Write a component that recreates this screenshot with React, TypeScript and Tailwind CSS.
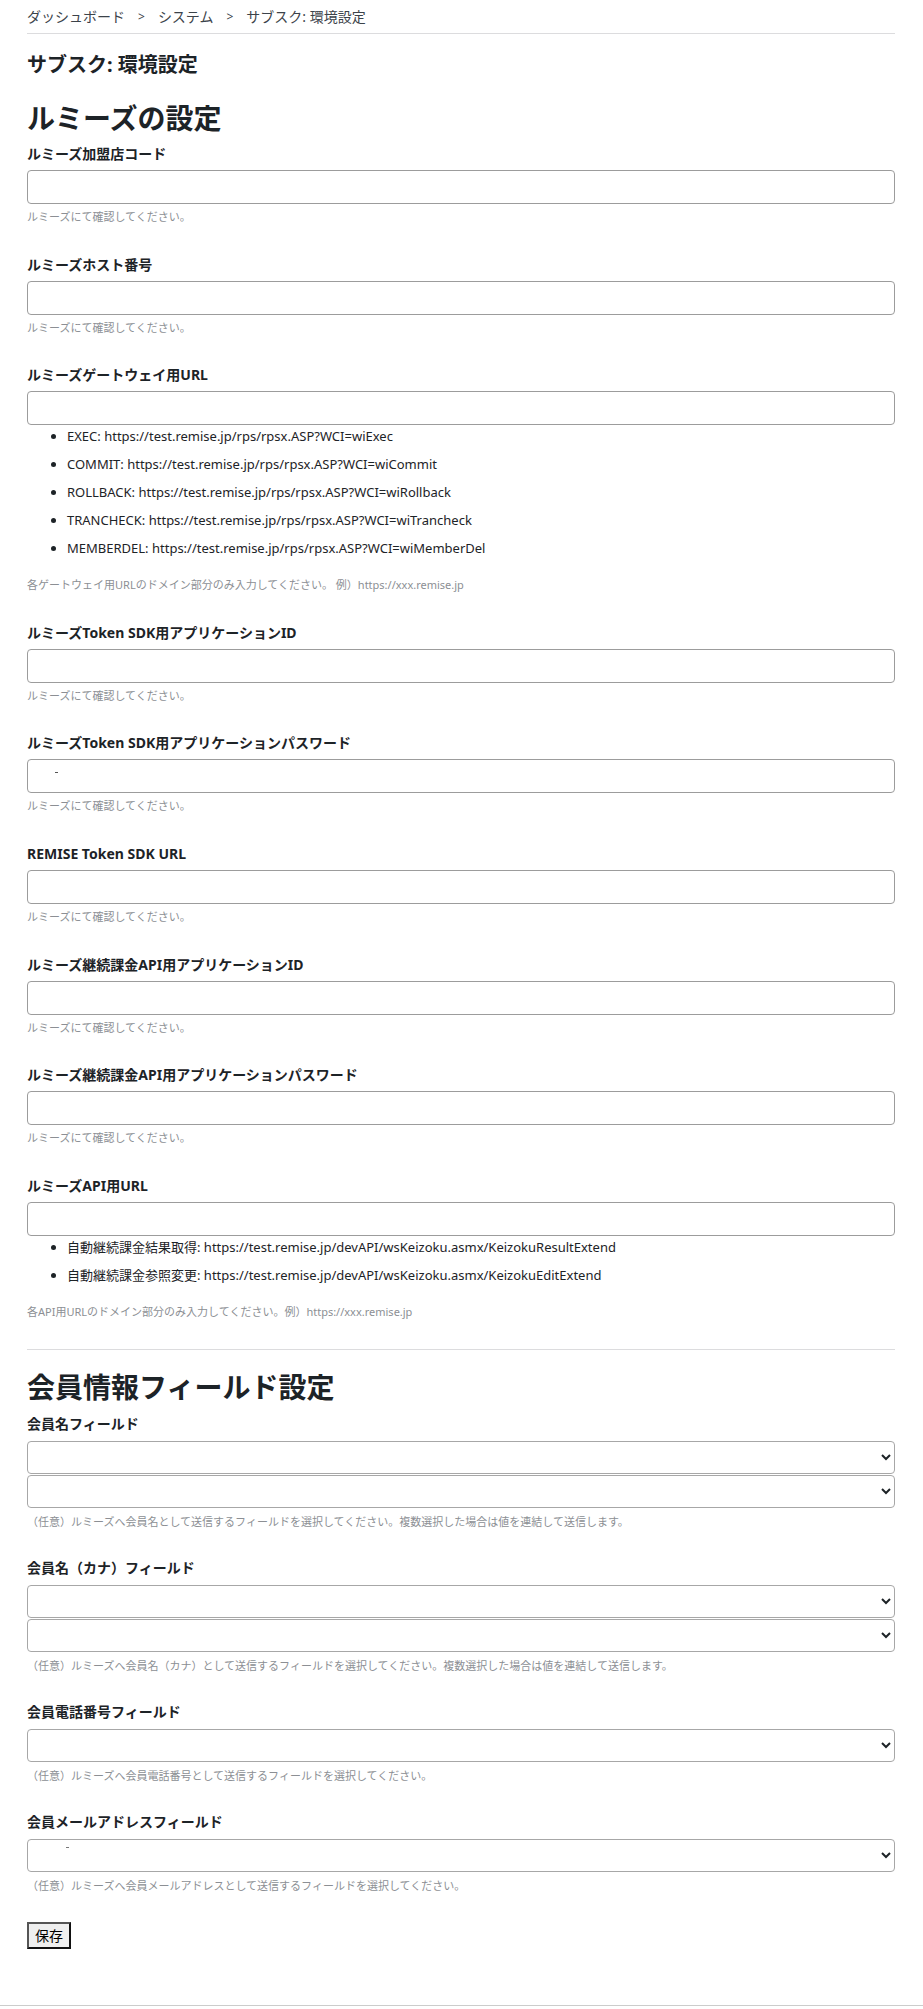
import React from "react";

const HELP = "ルミーズにて確認してください。";

function Label({ children }: { children: React.ReactNode }) {
  return (
    <div className="text-[14px] leading-[20px] font-bold text-[#1d2327] mb-[6px]">
      {children}
    </div>
  );
}

function Help({ children, className = "" }: { children: React.ReactNode; className?: string }) {
  return (
    <div className={"text-[11px] leading-[16px] text-[#8c8f94] " + className}>{children}</div>
  );
}

function TextInput({ mark = false }: { mark?: boolean }) {
  return (
    <div className="relative">
      <input
        type="text"
        className="block w-full h-[34px] border border-[#9c9c9c] rounded-[4px] bg-white px-2 text-[14px]"
      />
      {mark && <span className="absolute left-[28px] top-[13px] w-[3px] h-[1px] bg-[#555]" />}
    </div>
  );
}

function Select({ mark = false }: { mark?: boolean }) {
  return (
    <div className="relative">
      <select className="block w-full h-[33px] border border-[#a7a7a7] rounded-[4px] bg-white px-2 text-[14px] text-[#1d2327]">
        <option value=""></option>
      </select>
      {mark && <span className="absolute left-[39px] top-[8px] w-[3px] h-[1px] bg-[#777]" />}
    </div>
  );
}

function Field({ label, mark = false }: { label: string; mark?: boolean }) {
  return (
    <div className="mb-[29.6px]">
      <Label>{label}</Label>
      <TextInput mark={mark} />
      <Help className="mt-[5px]">{HELP}</Help>
    </div>
  );
}

function UrlList({ items }: { items: string[] }) {
  return (
    <ul className="list-disc pl-[40px] mt-[1px] text-[13px] leading-[20px] text-[#1d2327]">
      {items.map((t) => (
        <li key={t} className="mb-[8px]">
          {t}
        </li>
      ))}
    </ul>
  );
}

function MemberField({ label, selects, help, mark = false }: { label: string; selects: number; help: string; mark?: boolean }) {
  return (
    <div className="mb-[28px]">
      <div className="text-[14px] leading-[20px] font-bold text-[#1d2327] mb-[7px]">{label}</div>
      <div className="flex flex-col gap-[1px]">
        {Array.from({ length: selects }).map((_, i) => (
          <Select key={i} mark={mark} />
        ))}
      </div>
      <Help className="mt-[6px]">{help}</Help>
    </div>
  );
}

export default function App() {
  return (
    <div className="bg-white min-h-[2009px] text-[#1d2327] [font-family:'Noto_Sans','Noto_Sans_CJK_JP',sans-serif]">
      <div className="pl-[27px] pr-[28px]">
        <div className="pt-[7px] pb-[6px] border-b border-[#dcdcde] text-[14px] leading-[20px] text-[#3c434a] flex items-center">
          <span>ダッシュボード</span>
          <span className="mx-[13px] text-[12px]">&gt;</span>
          <span>システム</span>
          <span className="mx-[13px] text-[12px]">&gt;</span>
          <span>サブスク: 環境設定</span>
        </div>

        <h1 className="mt-[17px] text-[20px] leading-[28px] font-bold">サブスク: 環境設定</h1>
        <h2 className="mt-[21px] text-[28px] leading-[36px] font-bold">ルミーズの設定</h2>

        <div className="mt-[8px]">
          <Field label="ルミーズ加盟店コード" />
          <Field label="ルミーズホスト番号" />

          <div className="mb-[29.6px]">
            <Label>ルミーズゲートウェイ用URL</Label>
            <TextInput />
            <UrlList
              items={[
                "EXEC: https://test.remise.jp/rps/rpsx.ASP?WCI=wiExec",
                "COMMIT: https://test.remise.jp/rps/rpsx.ASP?WCI=wiCommit",
                "ROLLBACK: https://test.remise.jp/rps/rpsx.ASP?WCI=wiRollback",
                "TRANCHECK: https://test.remise.jp/rps/rpsx.ASP?WCI=wiTrancheck",
                "MEMBERDEL: https://test.remise.jp/rps/rpsx.ASP?WCI=wiMemberDel",
              ]}
            />
            <Help className="mt-[19px]">各ゲートウェイ用URLのドメイン部分のみ入力してください。 例）https://xxx.remise.jp</Help>
          </div>

          <Field label="ルミーズToken SDK用アプリケーションID" />
          <Field label="ルミーズToken SDK用アプリケーションパスワード" mark />
          <Field label="REMISE Token SDK URL" />
          <Field label="ルミーズ継続課金API用アプリケーションID" />
          <Field label="ルミーズ継続課金API用アプリケーションパスワード" />

          <div className="pb-[29.6px] border-b border-[#dcdcde]">
            <Label>ルミーズAPI用URL</Label>
            <TextInput />
            <UrlList
              items={[
                "自動継続課金結果取得: https://test.remise.jp/devAPI/wsKeizoku.asmx/KeizokuResultExtend",
                "自動継続課金参照変更: https://test.remise.jp/devAPI/wsKeizoku.asmx/KeizokuEditExtend",
              ]}
            />
            <Help className="mt-[19px]">各API用URLのドメイン部分のみ入力してください。例）https://xxx.remise.jp</Help>
          </div>
        </div>

        <h2 className="mt-[19px] text-[28px] leading-[36px] font-bold">会員情報フィールド設定</h2>

        <div className="mt-[9px]">
          <MemberField
            label="会員名フィールド"
            selects={2}
            help="（任意）ルミーズへ会員名として送信するフィールドを選択してください。複数選択した場合は値を連結して送信します。"
          />
          <MemberField
            label="会員名（カナ）フィールド"
            selects={2}
            help="（任意）ルミーズへ会員名（カナ）として送信するフィールドを選択してください。複数選択した場合は値を連結して送信します。"
          />
          <MemberField
            label="会員電話番号フィールド"
            selects={1}
            help="（任意）ルミーズへ会員電話番号として送信するフィールドを選択してください。"
          />
          <MemberField
            label="会員メールアドレスフィールド"
            selects={1}
            mark
            help="（任意）ルミーズへ会員メールアドレスとして送信するフィールドを選択してください。"
          />
        </div>

        <button
          type="button"
          className="block h-[27px] px-[6px] bg-[#efefef] border-2 border-t-[#555] border-l-[#555] border-r-[#111] border-b-[#111] text-[14px] leading-[20px] text-black"
        >
          保存
        </button>
      </div>
      <div className="mt-[56px] border-t border-[#cccccc] h-[3px]" />
    </div>
  );
}
